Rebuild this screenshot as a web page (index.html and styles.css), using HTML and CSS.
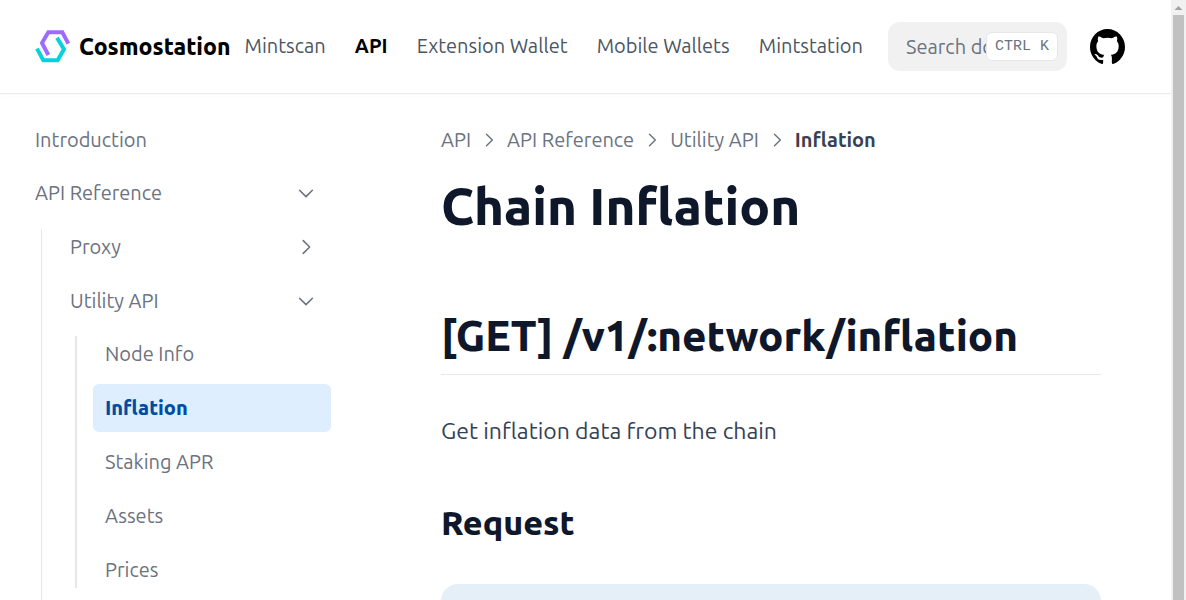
FILE: index.html
```html
<!DOCTYPE html>
<html lang="en">
<head>
<meta charset="utf-8">
<meta name="viewport" content="width=device-width, initial-scale=1">
<title>Chain Inflation – Cosmostation</title>
<link rel="stylesheet" href="styles.css">
</head>
<body>
<svg class="sprite" aria-hidden="true">
  <symbol id="chevron" viewBox="0 0 24 24"><path d="M9 5l7 7-7 7" fill="none" stroke="currentColor" stroke-width="1.7" stroke-linecap="round" stroke-linejoin="round"/></symbol>
</svg>
<div class="page">
  <header class="header">
    <a class="brand" href="#">
      <svg class="brand-mark" viewBox="27 20 108 105" fill="none" stroke-width="12" aria-hidden="true">
        <path stroke="#9c6cff" d="M127 64L109 30H67L48 62L67 98"/>
        <path stroke="#05d2dd" d="M33 79L52 114H95L114 81L93 46"/>
      </svg>
      <span>Cosmostation</span>
    </a>
    <nav class="nav" aria-label="Main">
      <a href="#">Mintscan</a>
      <a class="current" href="#" aria-current="page">API</a>
      <a href="#">Extension Wallet</a>
      <a href="#">Mobile Wallets</a>
      <a href="#">Mintstation</a>
    </nav>
    <div class="search">
      <input type="text" aria-label="Search documentation" placeholder="Search documentation…">
      <kbd>CTRL K</kbd>
    </div>
    <a class="github" href="#" aria-label="GitHub">
      <svg viewBox="3 3 18 18" fill="currentColor" aria-hidden="true"><path d="M12 3C7.0275 3 3 7.12937 3 12.2276C3 16.3109 5.57625 19.7597 9.15374 20.9824C9.60374 21.0631 9.77249 20.7863 9.77249 20.5441C9.77249 20.3249 9.76125 19.5982 9.76125 18.8254C7.5 19.2522 6.915 18.2602 6.735 17.7412C6.63375 17.4759 6.19499 16.6569 5.8125 16.4378C5.4975 16.2647 5.0475 15.838 5.80124 15.8264C6.51 15.8149 7.01625 16.4954 7.18499 16.7723C7.99499 18.1679 9.28875 17.7758 9.80625 17.5335C9.885 16.9337 10.1212 16.53 10.38 16.2993C8.3775 16.0687 6.285 15.2728 6.285 11.7432C6.285 10.7397 6.63375 9.9092 7.20749 9.26326C7.1175 9.03257 6.8025 8.08674 7.2975 6.81794C7.2975 6.81794 8.05125 6.57571 9.77249 7.76377C10.4925 7.55615 11.2575 7.45234 12.0225 7.45234C12.7875 7.45234 13.5525 7.55615 14.2725 7.76377C15.9937 6.56418 16.7475 6.81794 16.7475 6.81794C17.2424 8.08674 16.9275 9.03257 16.8375 9.26326C17.4113 9.9092 17.76 10.7281 17.76 11.7432C17.76 15.2843 15.6563 16.0687 13.6537 16.2993C13.98 16.5877 14.2613 17.1414 14.2613 18.0065C14.2613 19.2407 14.25 20.2326 14.25 20.5441C14.25 20.7863 14.4188 21.0746 14.8688 20.9824C18.4238 19.7597 21 16.2993 21 12.2276C21 7.12937 16.9725 3 12 3Z"/></svg>
    </a>
  </header>
  <div class="body">
    <aside class="sidebar">
      <ul class="tree root">
        <li><a class="item" href="#">Introduction</a></li>
        <li>
          <button class="item" type="button" aria-expanded="true">API Reference<svg class="chevron down"><use href="#chevron"/></svg></button>
          <div class="branch">
            <ul class="tree">
              <li><button class="item" type="button" aria-expanded="false">Proxy<svg class="chevron"><use href="#chevron"/></svg></button></li>
              <li>
                <button class="item" type="button" aria-expanded="true">Utility API<svg class="chevron down"><use href="#chevron"/></svg></button>
                <div class="branch inner">
                  <ul class="tree">
                    <li><a class="item" href="#">Node Info</a></li>
                    <li><a class="item active" href="#" aria-current="page">Inflation</a></li>
                    <li><a class="item" href="#">Staking APR</a></li>
                    <li><a class="item" href="#">Assets</a></li>
                    <li><a class="item" href="#">Prices</a></li>
                  </ul>
                </div>
              </li>
              <li class="spacer"></li>
            </ul>
          </div>
        </li>
      </ul>
    </aside>
    <main class="main">
      <nav class="crumbs" aria-label="Breadcrumb">
        <a href="#">API</a>
        <svg class="chevron"><use href="#chevron"/></svg>
        <a href="#">API Reference</a>
        <svg class="chevron"><use href="#chevron"/></svg>
        <a href="#">Utility API</a>
        <svg class="chevron"><use href="#chevron"/></svg>
        <span class="here">Inflation</span>
      </nav>
      <h1>Chain Inflation</h1>
      <h2>[GET] /v1/:network/inflation</h2>
      <p>Get inflation data from the chain</p>
      <h3>Request</h3>
      <div class="code"></div>
    </main>
  </div>
</div>
<div class="scrollbar" aria-hidden="true">
  <svg viewBox="0 0 15 15"><path d="M7.5 6L11.5 10H3.5Z" fill="#a3a3a3"/></svg>
  <div class="thumb"></div>
</div>
</body>
</html>
```
FILE: styles.css
```css
* { box-sizing: border-box; }

body {
  margin: 0;
  height: 100vh;
  display: flex;
  overflow: hidden;
  background: #fff;
  color: #0f172a;
  font-family: Ubuntu, "Noto Sans", sans-serif;
  font-size: 20px;
  line-height: 28px;
}

a { color: inherit; text-decoration: none; }
.sprite { display: none; }
.page { flex: 1; min-width: 0; }

.header {
  display: flex;
  align-items: center;
  height: 94px;
  padding: 0 46px 0 35px;
  border-bottom: 1px solid #e9e9e9;
  box-shadow: 0 2px 4px rgba(0, 0, 0, 0.02);
  white-space: nowrap;
}

.brand {
  display: flex;
  align-items: center;
  gap: 8px;
  color: #000;
  font-size: 23px;
  font-weight: 800;
}
.brand-mark { width: 36px; height: 35px; }

.nav {
  flex: 1;
  display: flex;
  justify-content: space-between;
  padding: 0 25px 2px 14px;
  color: #4b5563;
}
.nav .current { color: #000; font-weight: 600; }

.search {
  position: relative;
  width: 179px;
  height: 49px;
  border-radius: 12px;
  background: #f1f1f1;
}
.search input {
  width: 100%;
  height: 100%;
  padding: 0 18px;
  border: 0;
  outline: 0;
  background: none;
  font: inherit;
}
.search input::placeholder { color: #6b7280; opacity: 1; }
.search kbd {
  position: absolute;
  top: 10px;
  right: 9px;
  height: 29px;
  padding: 0 8px;
  border: 1px solid #e5e7eb;
  border-radius: 6px;
  background: #fff;
  color: #6b7280;
  font: 15px/28px "Liberation Mono", monospace;
}

.github { margin-left: 23px; color: #000; }
.github svg { display: block; width: 35px; height: 35px; }

.body { display: flex; }

.sidebar {
  flex: none;
  width: 366px;
  padding: 22px 35px 0 23px;
  color: #6b7280;
}
.tree {
  flex: 1;
  display: flex;
  flex-direction: column;
  gap: 6px;
  margin: 0;
  padding: 0;
  list-style: none;
}
.root { gap: 5px; }
.item {
  display: flex;
  align-items: center;
  justify-content: space-between;
  width: 100%;
  height: 48px;
  padding: 0 14px 0 12px;
  border: 0;
  border-radius: 6px;
  background: none;
  color: inherit;
  font: inherit;
  text-align: left;
}
.item.active { background: #deeeff; color: #004ca3; font-weight: 800; }

.branch {
  display: flex;
  gap: 16px;
  padding: 6px 0 0 18px;
}
.branch::before {
  content: "";
  width: 1px;
  margin: 6px 0;
  background: #e5e7eb;
}
.branch.inner { padding: 5px 0 0 17px; }
.branch.inner::before { width: 2px; }
.spacer { height: 48px; }

.chevron { flex: none; width: 22px; height: 22px; }
.down { transform: rotate(90deg); }

.main {
  flex: 1;
  min-width: 0;
  padding: 32px 70px 0 75px;
}
.crumbs {
  display: flex;
  align-items: center;
  gap: 8px;
  color: #6b7280;
  white-space: nowrap;
}
.crumbs .chevron { width: 20px; height: 20px; }
.here { color: #374151; font-weight: 600; }

h1, h2, h3, p { margin: 0; }
h1, h2, h3 { font-weight: 800; }
h1 { margin-top: 23px; font-size: 51px; line-height: 58px; }
h2 {
  margin-top: 72px;
  padding-bottom: 9px;
  border-bottom: 1px solid #e8e9eb;
  font-size: 42px;
  line-height: 58px;
}
p { margin-top: 36px; color: #334155; font-size: 23px; line-height: 40px; }
h3 { margin-top: 49px; font-size: 34px; line-height: 44px; }
.code {
  height: 120px;
  margin-top: 40px;
  border-radius: 17px;
  background: #e5eff8;
}

.scrollbar {
  flex: none;
  display: flex;
  flex-direction: column;
  width: 15px;
  background: #f1f1f1;
}
.scrollbar svg { display: block; width: 15px; height: 15px; }
.thumb { flex: 1; margin: 0 2px; background: #c1c1c1; }
```
